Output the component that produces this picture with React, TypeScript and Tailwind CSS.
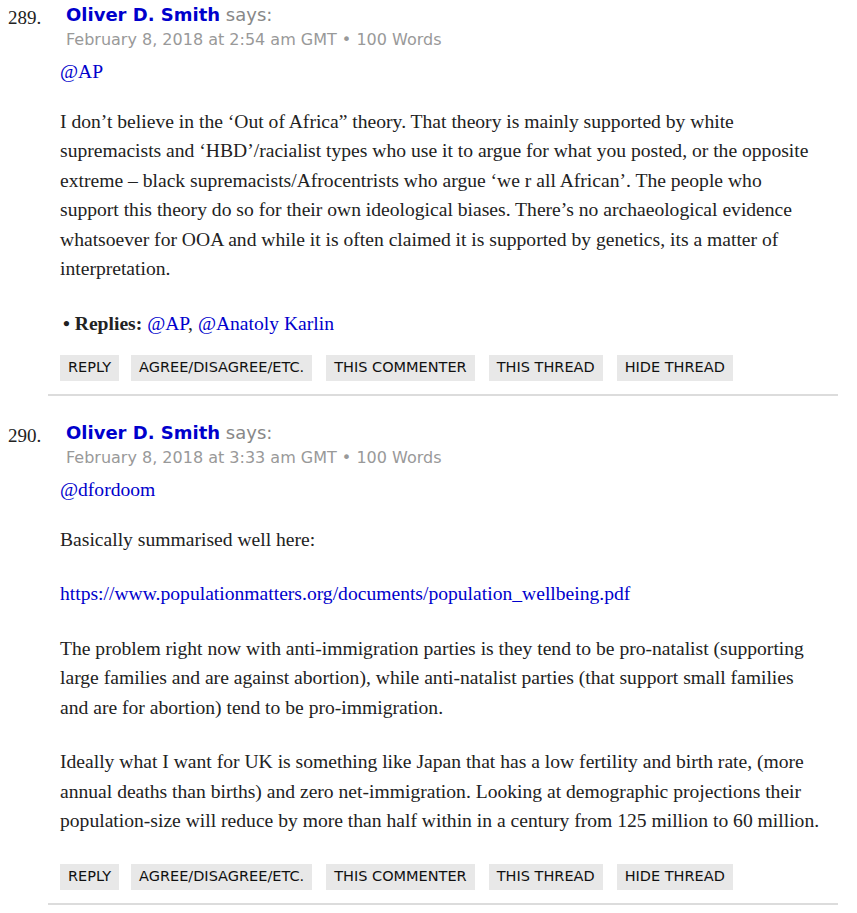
import React from "react";

type Comment = {
    num: number;
    time: string;
    to: string;
    body: React.ReactNode[];
    replies?: string[];
};

const sans = { fontFamily: '"DejaVu Sans", Verdana, sans-serif' };

const comments: Comment[] = [
    {
        num: 289,
        time: "February 8, 2018 at 2:54 am GMT",
        to: "@AP",
        body: [
            "I don\u2019t believe in the \u2018Out of Africa\u201d theory. That theory is mainly supported by white supremacists and \u2018HBD\u2019/racialist types who use it to argue for what you posted, or the opposite extreme \u2013 black supremacists/Afrocentrists who argue \u2018we r all African\u2019. The people who support this theory do so for their own ideological biases. There\u2019s no archaeological evidence whatsoever for OOA and while it is often claimed it is supported by genetics, its a matter of interpretation.",
        ],
        replies: ["@AP", "@Anatoly Karlin"],
    },
    {
        num: 290,
        time: "February 8, 2018 at 3:33 am GMT",
        to: "@dfordoom",
        body: [
            "Basically summarised well here:",
            <a key="l" className="text-[#0000cc]">
                https://www.populationmatters.org/documents/population_wellbeing.pdf
            </a>,
            "The problem right now with anti-immigration parties is they tend to be pro-natalist (supporting large families and are against abortion), while anti-natalist parties (that support small families and are for abortion) tend to be pro-immigration.",
            "Ideally what I want for UK is something like Japan that has a low fertility and birth rate, (more annual deaths than births) and zero net-immigration. Looking at demographic projections their population-size will reduce by more than half within in a century from 125 million to 60 million.",
        ],
    },
];

const buttons = ["REPLY", "AGREE/DISAGREE/ETC.", "THIS COMMENTER", "THIS THREAD", "HIDE THREAD"];

function CommentItem({ c }: { c: Comment }) {
    return (
        <div className="pt-[3px]">
            <div className="flex">
                <div className="w-[66px] pl-[8px] pt-[3px] text-[19px] leading-[24px] text-[#222]">{c.num}.</div>
                <div>
                    <div className="text-[18px] leading-[24px]" style={sans}>
                        <span className="font-bold text-[#0000cc]">Oliver D. Smith</span>{" "}
                        <span className="text-[#888]">says:</span>
                    </div>
                    <div className="text-[16px] leading-[26px] text-[#999]" style={sans}>
                        {c.time} &bull; 100 Words
                    </div>
                </div>
            </div>
            <div className="pl-[60px] pr-[33px] text-[19.6px] leading-[29.5px] text-[#222]">
                <div className="mt-[4px] mb-[20px] text-[#0000cc]">{c.to}</div>
                {c.body.map((p, i) => (
                    <p key={i} className={i === c.body.length - 1 && !c.replies ? "mb-[28px]" : "mb-[25px]"}>
                        {p}
                    </p>
                ))}
                {c.replies && (
                    <div className="pl-[3px] mb-[17px]">
                        <b>&bull; Replies:</b>{" "}
                        {c.replies.map((r, i) => (
                            <span key={r}>
                                <a className="text-[#0000cc]">{r}</a>
                                {i < c.replies!.length - 1 ? ", " : ""}
                            </span>
                        ))}
                    </div>
                )}
            </div>
            <div className="flex gap-[14px] pl-[60px]" style={sans}>
                {buttons.map((b, i) => (
                    <span
                        key={b}
                        className={`bg-[#e8e8e8] h-[26px] px-[8px] flex items-center text-[14.5px] text-[#111] ${
                            i === 0 ? "-mr-[2px]" : ""
                        }`}
                    >
                        {b}
                    </span>
                ))}
            </div>
            <div className="ml-[48px] mr-[19px] mt-[13px] mb-[22px] border-t-2 border-[#dcdcdc]" />
        </div>
    );
}

export default function App() {
    return (
        <div className="bg-white min-h-screen" style={{ fontFamily: '"Liberation Serif", "Times New Roman", serif' }}>
            {comments.map((c) => (
                <CommentItem key={c.num} c={c} />
            ))}
        </div>
    );
}
